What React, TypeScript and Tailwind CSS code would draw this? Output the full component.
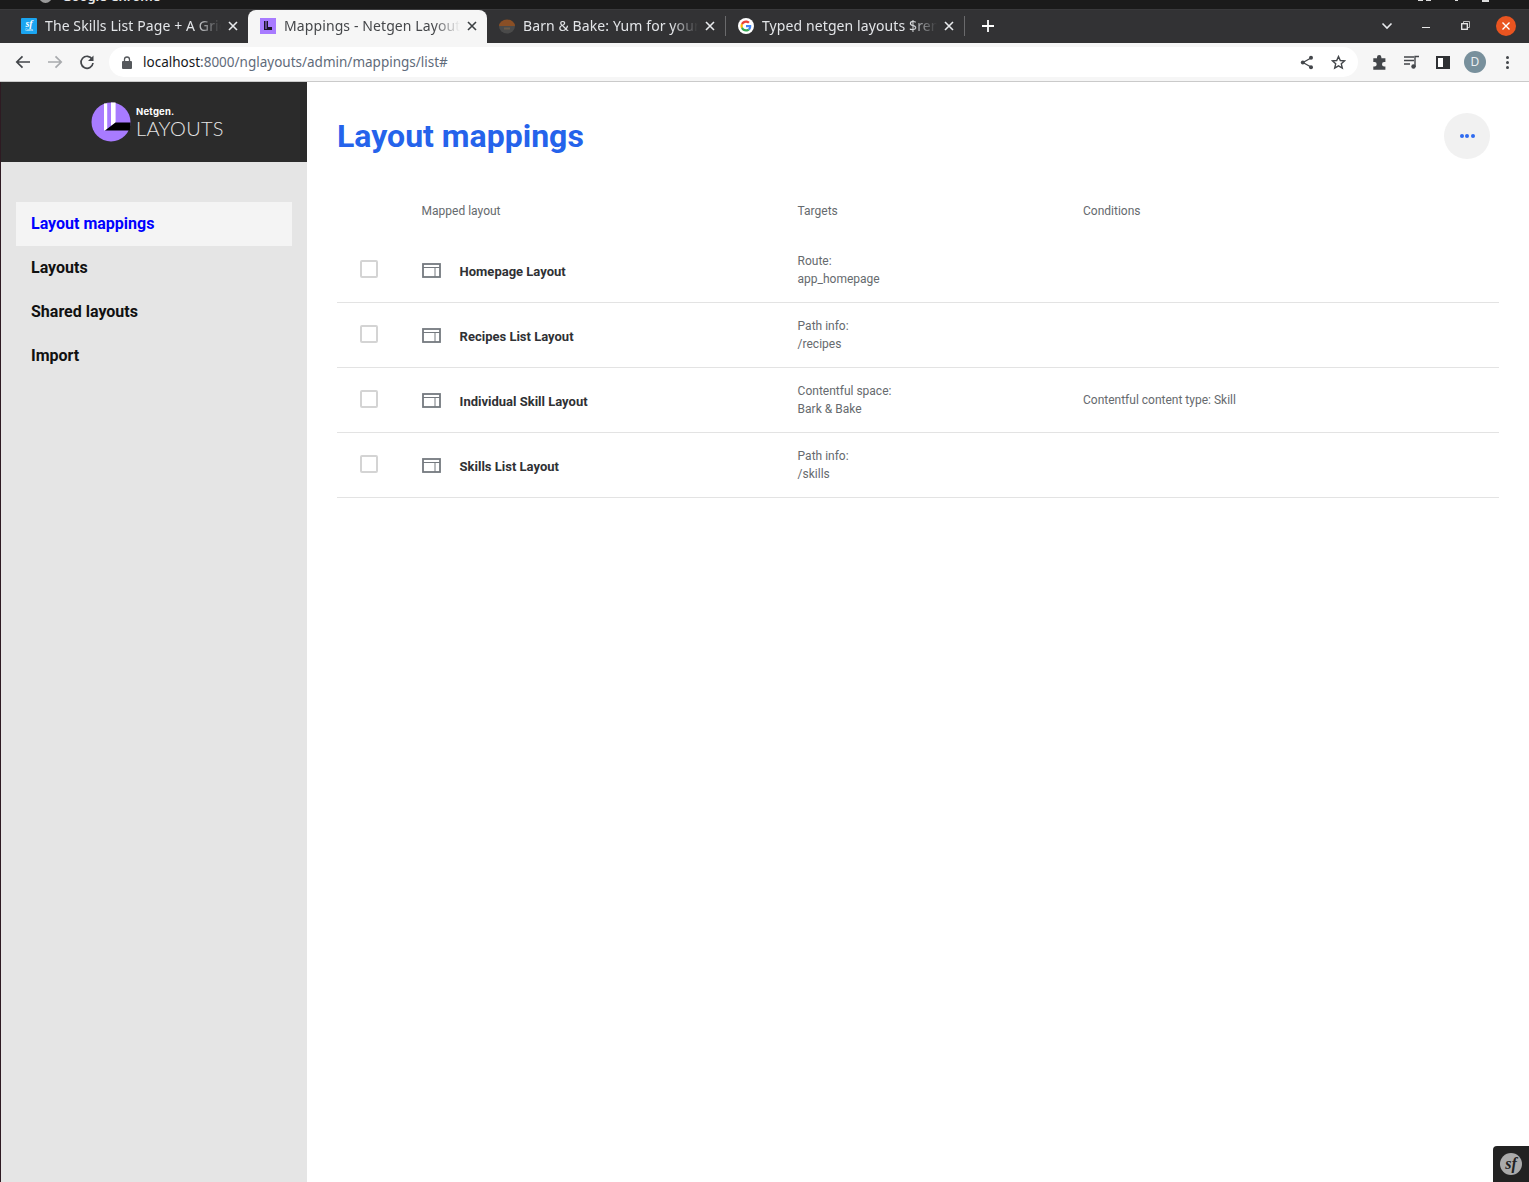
import React from "react";

const chromeFont = { fontFamily: "'Noto Sans', 'Open Sans', sans-serif" };

function SfIcon() {
  return (
    <div className="flex h-4 w-4 flex-col items-center justify-center rounded-[1px] bg-[#1ba5f0] text-white">
      <span className="font-['Liberation_Serif',serif] text-[10px] leading-[9px] italic font-bold">sf</span>
      <span className="text-[3px] leading-[4px]">Casts</span>
    </div>
  );
}

function NetgenIcon() {
  return (
    <svg width="16" height="16" viewBox="0 0 16 16">
      <rect width="16" height="16" fill="#a87bff" />
      <path d="M4 3h1.500v8H4zM6.500 3H8v6h4v3H4v-1h2.500z" fill="#1c1426" />
    </svg>
  );
}

function BarnIcon() {
  return (
    <svg width="16" height="16" viewBox="0 0 16 16">
      <path d="M0 8a8 6.500 0 0 1 16 0z" fill="#8a4f25" />
      <path d="M0 8h16a8 7.500 0 0 1-16 0z" fill="#4a4a4a" />
      <rect x="5" y="9.500" width="6" height="2" fill="#6a5a48" />
    </svg>
  );
}

function GoogleIcon() {
  return (
    <svg width="16" height="16" viewBox="0 0 48 48">
      <circle cx="24" cy="24" r="24" fill="#fff" />
      <g transform="translate(7.500 7.500) scale(0.6875)">
        <path fill="#EA4335" d="M24 9.500c3.540 0 6.710 1.220 9.210 3.600l6.850-6.850C35.900 2.380 30.470 0 24 0 14.620 0 6.510 5.380 2.560 13.220l7.980 6.190C12.430 13.720 17.740 9.500 24 9.500z" />
        <path fill="#4285F4" d="M46.980 24.550c0-1.570-.15-3.090-.38-4.550H24v9.020h12.940c-.58 2.960-2.260 5.480-4.780 7.180l7.730 6c4.510-4.180 7.090-10.360 7.090-17.650z" />
        <path fill="#FBBC05" d="M10.530 28.590c-.48-1.450-.76-2.990-.76-4.590s.27-3.140.76-4.590l-7.980-6.190C.92 16.460 0 20.120 0 24c0 3.880.92 7.540 2.560 10.780l7.970-6.190z" />
        <path fill="#34A853" d="M24 48c6.480 0 11.930-2.130 15.890-5.810l-7.730-6c-2.150 1.450-4.920 2.300-8.160 2.300-6.260 0-11.570-4.220-13.470-9.910l-7.980 6.190C6.510 42.620 14.620 48 24 48z" />
      </g>
    </svg>
  );
}

function TabClose({ dark }: { dark?: boolean }) {
  return (
    <svg width="10" height="10" viewBox="0 0 10 10" className="shrink-0">
      <path d="M1 1l8 8M9 1l-8 8" stroke={dark ? "#3c4043" : "#e8eaed"} strokeWidth="1.600" />
    </svg>
  );
}

function Tab({ icon, title, active, sep }: { icon: React.ReactNode; title: string; active?: boolean; sep?: boolean }) {
  return (
    <div
      className={
        active
          ? "flex h-[34px] w-[239px] shrink-0 items-center rounded-t-[8px] bg-[#f6f6f6] pr-[10px] pb-[2px] pl-[12px] text-[#45474a]"
          : "flex h-[34px] w-[239px] shrink-0 items-center pr-[10px] pb-[2px] pl-[12px] text-[#e3e5e8]"
      }
    >
      <div className="flex w-4 shrink-0 justify-center">{icon}</div>
      <div
        className="ml-[8px] min-w-0 flex-1 overflow-hidden text-[14px] leading-[20px] tracking-[0.1px] whitespace-nowrap [mask-image:linear-gradient(to_right,black_85%,transparent_100%)]"
        style={chromeFont}
      >
        {title}
      </div>
      <div className="ml-[7px]">
        <TabClose dark={active} />
      </div>
      {sep && <div className="ml-[10px] -mr-[10px] h-[20px] w-px bg-[#6a6a6c]" />}
    </div>
  );
}

function LogoMark() {
  return (
    <svg width="40" height="40" viewBox="0 0 40 40" className="shrink-0">
      <circle cx="20" cy="20" r="19.500" fill="#a87bff" />
      <path d="M13 1.500h3.200V27.500L13 28.500z" fill="#fff" />
      <path d="M20 .500h4.600V20.500L20 24z" fill="#fff" />
      <path d="M14 28.500L24.500 20.500H39.500L38.800 28.500z" fill="#000" />
    </svg>
  );
}

function LayoutIcon() {
  return (
    <svg width="19" height="15" viewBox="0 0 19 15" className="shrink-0">
      <rect x="1" y="1" width="17" height="13" fill="none" stroke="#74797f" strokeWidth="1.800" />
      <path d="M1 4.500h17M13 4.500V14" fill="none" stroke="#74797f" strokeWidth="1" />
    </svg>
  );
}

function NavItem({ label, active }: { label: string; active?: boolean }) {
  return (
    <div
      className={
        active
          ? "flex h-[44px] items-center bg-[#f4f4f4] pl-[15px] text-[16px] font-bold text-[#0000ff]"
          : "flex h-[44px] items-center pl-[15px] text-[16px] font-bold text-[#111111]"
      }
    >
      {label}
    </div>
  );
}

const rows = [
  { name: "Homepage Layout", t1: "Route:", t2: "app_homepage", cond: "" },
  { name: "Recipes List Layout", t1: "Path info:", t2: "/recipes", cond: "" },
  { name: "Individual Skill Layout", t1: "Contentful space:", t2: "Bark & Bake", cond: "Contentful content type: Skill" },
  { name: "Skills List Layout", t1: "Path info:", t2: "/skills", cond: "" },
];

export default function App() {
  return (
    <div className="relative flex h-[1182px] w-[1529px] flex-col overflow-hidden bg-white font-['Roboto',sans-serif]">
      {/* Window title strip */}
      <div className="flex h-[9px] shrink-0 items-end overflow-hidden bg-[#1b1b1b] pl-[39px]">
        <div className="mb-[6px] h-[13px] w-[13px] shrink-0 rounded-full bg-[#9a9a9a]" />
        <span className="mb-[6px] ml-[10px] text-[13px] leading-[14px] font-semibold text-[#e8e8e8]" style={chromeFont}>
          Google Chrome
        </span>
        <div className="ml-auto flex h-full items-start pr-[40px]">
          <div className="h-px w-[5px] bg-[#ddd]" />
          <div className="ml-[3px] h-px w-[5px] bg-[#ddd]" />
          <div className="ml-[24px] h-px w-[3px] bg-[#ddd]" />
          <div className="ml-[24px] h-[2px] w-[7px] bg-[#ddd]" />
        </div>
      </div>

      {/* Tab strip */}
      <div className="flex h-[34px] shrink-0 items-center border-t border-t-[#3a3a3c] bg-[#323234] pl-[9px]">
        <Tab icon={<SfIcon />} title="The Skills List Page + A Grid" />
        <Tab icon={<NetgenIcon />} title="Mappings - Netgen Layouts" active />
        <Tab icon={<BarnIcon />} title="Barn & Bake: Yum for your" sep />
        <Tab icon={<GoogleIcon />} title="Typed netgen layouts $render" sep />
        <svg width="14" height="14" viewBox="0 0 14 14" className="mb-[2px] ml-[16px] shrink-0">
          <path d="M7 1v12M1 7h12" stroke="#fff" strokeWidth="1.800" />
        </svg>
        <div className="mb-[2px] ml-auto flex items-center">
          <svg width="12" height="8" viewBox="0 0 12 8">
            <path d="M1.500 1.500L6 6l4.500-4.500" fill="none" stroke="#e8eaed" strokeWidth="1.600" />
          </svg>
          <div className="ml-[29px] mt-[4px] h-px w-[8px] bg-[#e8e8e8]" />
          <svg width="9" height="9" viewBox="0 0 9 9" className="ml-[31px]">
            <path d="M2.500 2V.500h6v6H7" fill="none" stroke="#bbb" strokeWidth="1" />
            <rect x=".7" y="2.700" width="5.600" height="5.600" fill="none" stroke="#eee" strokeWidth="1.300" />
          </svg>
          <div className="mr-[3px] ml-[26px] flex h-5 w-5 items-center justify-center rounded-full bg-[#e95420]">
            <svg width="10" height="10" viewBox="0 0 10 10">
              <path d="M1.500 1.500l7 7M8.500 1.500l-7 7" stroke="#fff" strokeWidth="1.400" />
            </svg>
          </div>
          <div className="w-[10px]" />
        </div>
      </div>

      {/* Toolbar */}
      <div className="flex h-[39px] shrink-0 items-center border-b border-b-[#cacaca] bg-[#f6f6f6] pl-[15px]">
        <svg width="16" height="14" viewBox="0 0 16 14" className="shrink-0">
          <path d="M15 7H2M7.500 1.300L1.800 7l5.700 5.700" fill="none" stroke="#43464a" strokeWidth="1.700" />
        </svg>
        <svg width="16" height="14" viewBox="0 0 16 14" className="ml-[16px] shrink-0">
          <path d="M1 7h13M8.500 1.300L14.200 7l-5.700 5.700" fill="none" stroke="#a8aaad" strokeWidth="1.700" />
        </svg>
        <svg width="16" height="16" viewBox="0 0 16 16" className="ml-[16px] shrink-0">
          <path d="M13.200 5.200A6 6 0 1 0 14 9" fill="none" stroke="#43464a" strokeWidth="1.700" />
          <path d="M14.500 1.500V7H9z" fill="#43464a" />
        </svg>
        <div className="ml-[14px] flex h-[30px] w-[1249px] shrink-0 items-center rounded-full bg-white pl-[13px]">
          <svg width="10" height="13" viewBox="0 0 10 13" className="shrink-0">
            <path d="M2.500 5V3.500a2.500 2.500 0 0 1 5 0V5" fill="none" stroke="#55585c" strokeWidth="1.300" />
            <rect y="5" width="10" height="8" rx="1" fill="#55585c" />
          </svg>
          <div className="ml-[11px] text-[13.500px] leading-[20px] whitespace-nowrap text-[#5f6b7a]" style={chromeFont}>
            <span className="text-[#16181b]">localhost</span>:8000/nglayouts/admin/mappings/list#
          </div>
          <div className="ml-auto flex items-center gap-[17px] pr-[12px]">
            <svg width="14" height="15" viewBox="0 0 14 15">
              <path d="M11 3L3 7.500l8 4.500" fill="none" stroke="#43464a" strokeWidth="1.300" />
              <circle cx="11" cy="2.800" r="2" fill="#43464a" />
              <circle cx="2.800" cy="7.500" r="2" fill="#43464a" />
              <circle cx="11" cy="12.200" r="2" fill="#43464a" />
            </svg>
            <svg width="15" height="15" viewBox="0 0 15 15">
              <path d="M7.500 1.500l1.800 4 4.300.4-3.300 2.900 1 4.300-3.800-2.300-3.800 2.300 1-4.300L1.400 5.900l4.300-.4z" fill="none" stroke="#43464a" strokeWidth="1.400" />
            </svg>
          </div>
        </div>
        <div className="ml-[14px] flex items-center">
          <svg width="15" height="15" viewBox="0 0 15 15" className="shrink-0">
            <path d="M5 2.300a2.200 2.200 0 0 1 4.400 0V3.300h4V7h-1.200a2.200 2.200 0 0 0 0 4.400h1.200v3.300H1.300v-3.300h1.200a2.200 2.200 0 0 0 0-4.400H1.300V3.300H5z" fill="#43464a" />
          </svg>
          <svg width="16" height="14" viewBox="0 0 16 14" className="ml-[17px] shrink-0">
            <path d="M0 2h10M0 5.500h10M0 9h6M11 12V1.500h4" fill="none" stroke="#43464a" strokeWidth="1.400" />
            <circle cx="9.500" cy="11.500" r="2.200" fill="#43464a" />
          </svg>
          <div className="ml-[16px] flex h-[13px] w-[14px] shrink-0 justify-end border-[2px] border-[#2f3134] bg-white">
            <div className="h-full w-[5px] bg-[#2f3134]" />
          </div>
          <div className="ml-[14px] flex h-[22px] w-[22px] shrink-0 items-center justify-center rounded-full bg-[#78909c] text-[12px] text-[#eceff1]" style={chromeFont}>
            D
          </div>
          <div className="ml-[20px] flex shrink-0 flex-col gap-[2px]">
            <div className="h-[3px] w-[3px] rounded-full bg-[#43464a]" />
            <div className="h-[3px] w-[3px] rounded-full bg-[#43464a]" />
            <div className="h-[3px] w-[3px] rounded-full bg-[#43464a]" />
          </div>
        </div>
      </div>

      {/* Page */}
      <div className="flex min-h-0 flex-1">
        <div className="w-px shrink-0 bg-[#2e1a22]" />
        <aside className="flex w-[306px] shrink-0 flex-col bg-[#e5e5e5]">
          <div className="flex h-[80px] shrink-0 items-center bg-[#2b2b2b] pb-[1px] pl-[90px]">
            <LogoMark />
            <div className="ml-[5px] flex flex-col">
              <span className="font-['Inter',sans-serif] text-[9.500px] leading-[12px] font-bold tracking-[0.2px] text-white">Netgen.</span>
              <span className="font-['Lato',sans-serif] text-[20px] leading-[20px] font-light tracking-[0.3px] text-[#e6e6e6]">LAYOUTS</span>
            </div>
          </div>
          <nav className="mt-[40px] ml-[15px] w-[276px]">
            <NavItem label="Layout mappings" active />
            <NavItem label="Layouts" />
            <NavItem label="Shared layouts" />
            <NavItem label="Import" />
          </nav>
        </aside>

        <main className="min-w-0 flex-1 pt-[30px] pr-[30px] pl-[30px]">
          <div className="flex items-center justify-between pr-[9px]">
            <h1 className="text-[32px] leading-[48px] font-bold text-[#2563eb]">Layout mappings</h1>
            <div className="flex h-[46px] w-[46px] items-center justify-center gap-[1.500px] rounded-full bg-[#f1f1f1]">
              <div className="h-[4px] w-[4px] rounded-full bg-[#2f6bf0]" />
              <div className="h-[4px] w-[4px] rounded-full bg-[#2f6bf0]" />
              <div className="h-[4px] w-[4px] rounded-full bg-[#2f6bf0]" />
            </div>
          </div>

          <div className="mt-[37px] mb-[13px] grid h-[28px] grid-cols-[84.6px_376px_285.4px_1fr] items-center text-[12px] text-[#666a6e]">
            <div />
            <div>Mapped layout</div>
            <div>Targets</div>
            <div>Conditions</div>
          </div>

          {rows.map((r) => (
            <div
              key={r.name}
              className="grid h-[65px] grid-cols-[84.6px_376px_285.4px_1fr] items-center border-b border-b-[#e3e3e3] pt-[3px] text-[12px] text-[#666a6e]"
            >
              <div className="pb-[5px] pl-[22.5px]">
                <div className="h-[18px] w-[18px] rounded-[2px] border-2 border-[#d4d4d4] bg-white" />
              </div>
              <div className="flex items-center gap-[19px]">
                <div className="pb-[2px]">
                  <LayoutIcon />
                </div>
                <span className="text-[13px] font-bold text-[#2f3134]">{r.name}</span>
              </div>
              <div className="pb-[4px] leading-[18px]">
                <div>{r.t1}</div>
                <div>{r.t2}</div>
              </div>
              <div className="pb-[3px]">{r.cond}</div>
            </div>
          ))}
        </main>
      </div>

      {/* Symfony toolbar toggle */}
      <div className="absolute right-0 bottom-0 flex h-[36px] w-[36px] items-center justify-center rounded-tl-[4px] bg-[#222222]">
        <div className="flex h-[22px] w-[22px] items-center justify-center rounded-full bg-[#aaaaaa] font-['Liberation_Serif',serif] text-[16px] leading-none font-bold text-[#222222] italic">
          sf
        </div>
      </div>
    </div>
  );
}
